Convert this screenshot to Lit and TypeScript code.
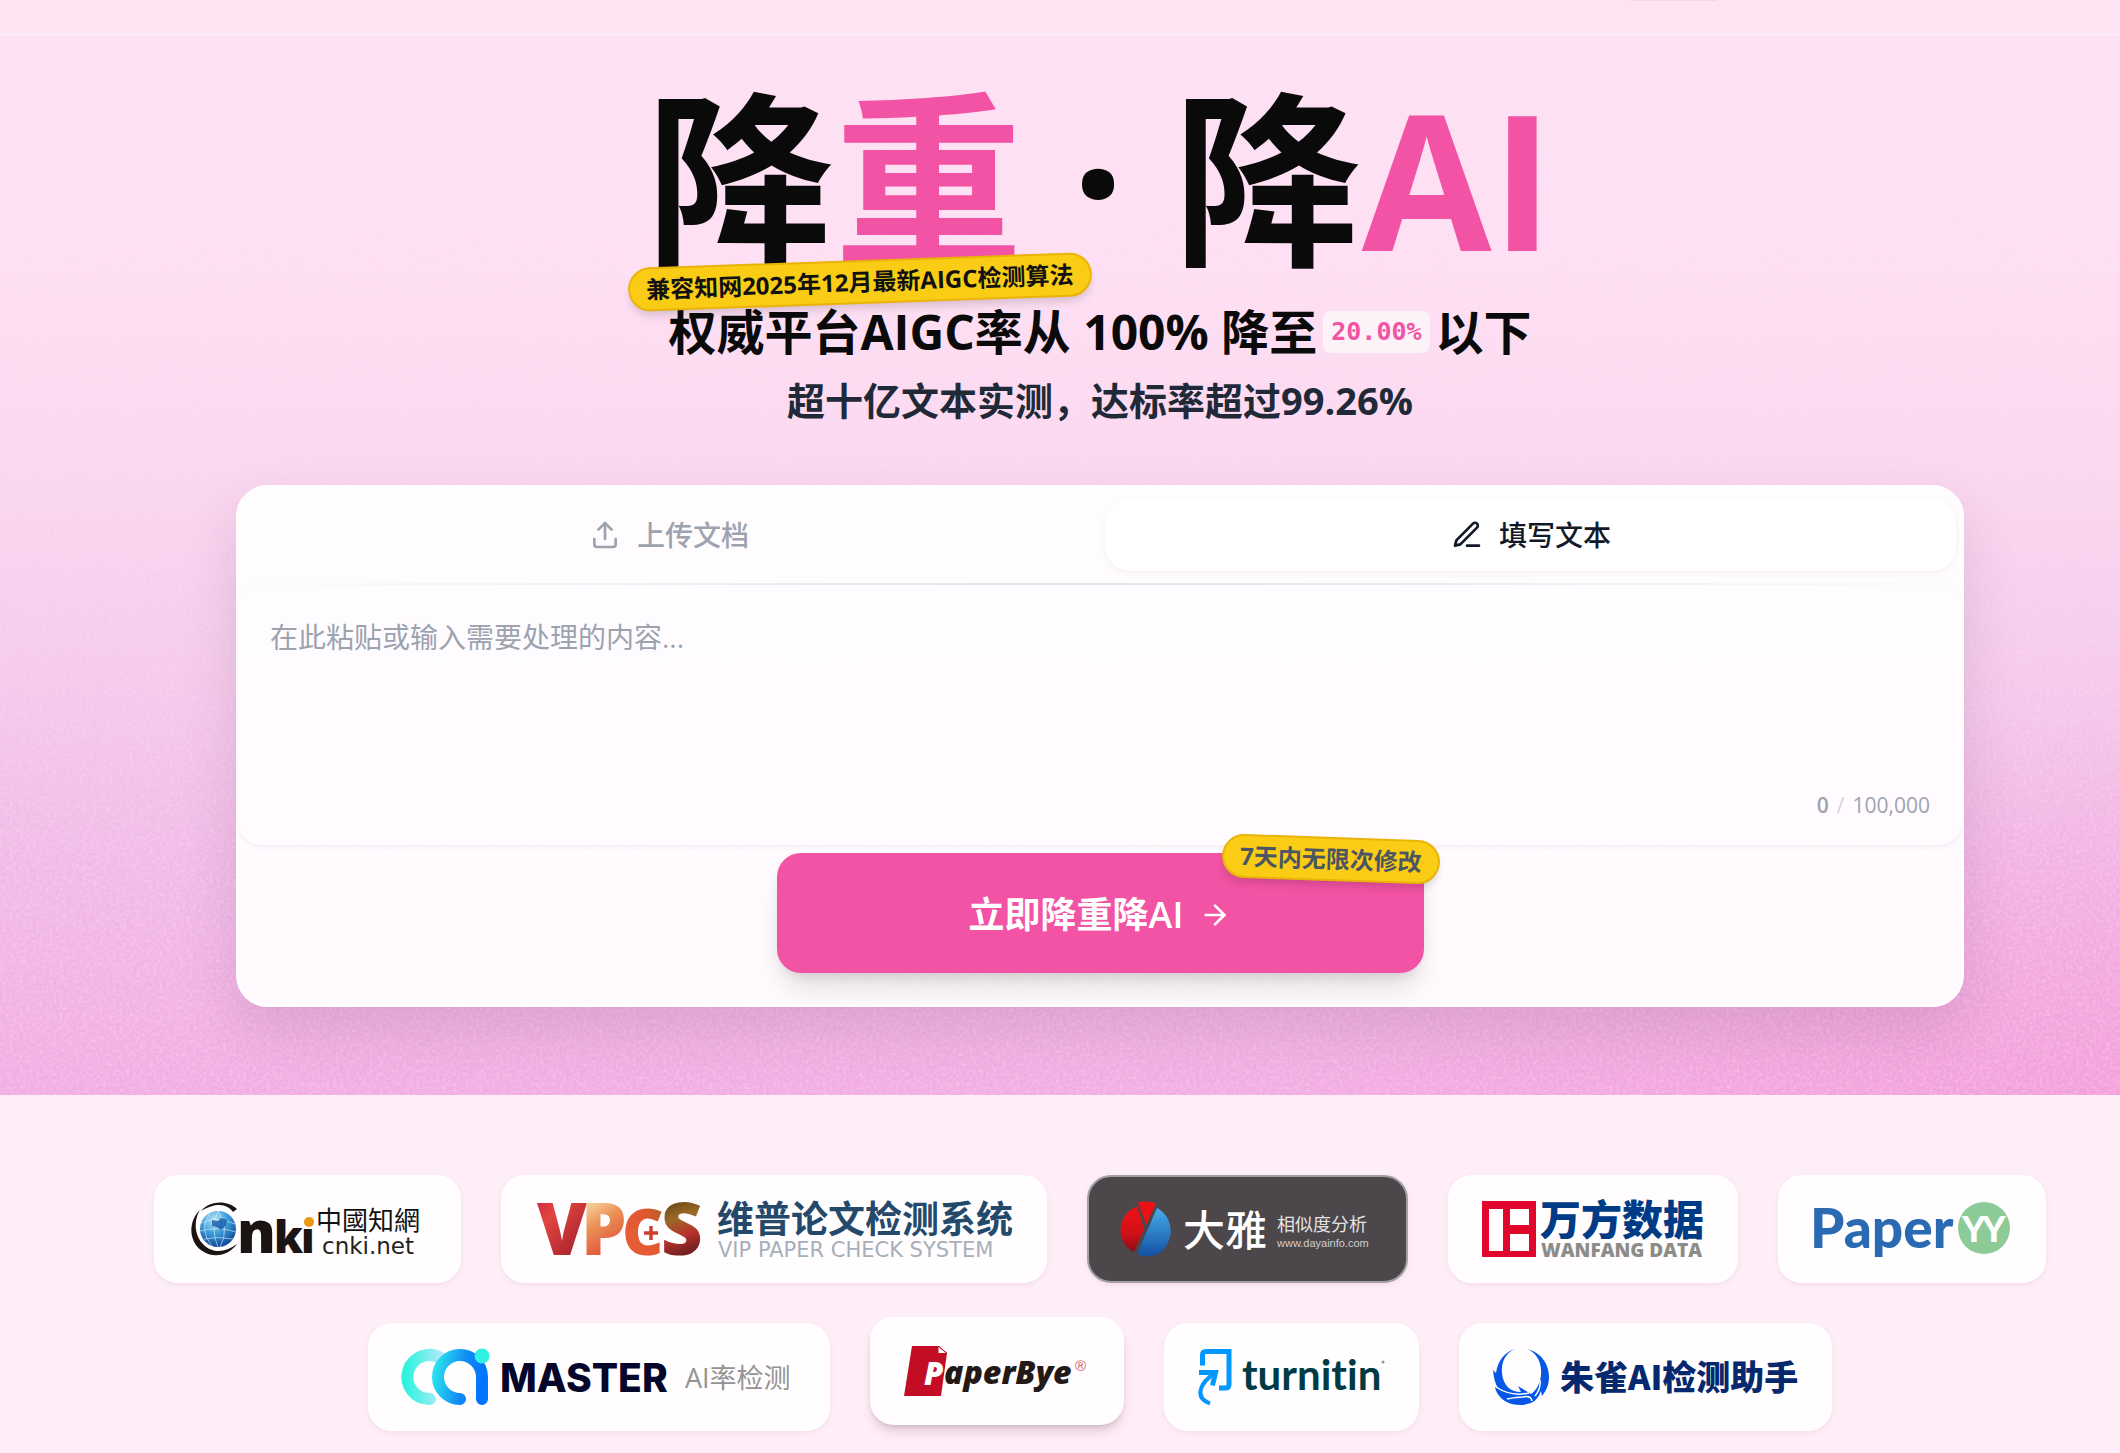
import { LitElement, html, css, svg } from "lit";
import { customElement, property, state } from "lit/decorators.js";

const sans = css`"Open Sans", "Noto Sans CJK SC", sans-serif`;

/* ---------- partner marks ---------- */

const cnki = svg`<svg width="239" height="56" viewBox="0 0 239 56" role="img" aria-label="中國知網">
  <defs>
    <radialGradient id="globe" cx="0.4" cy="0.25" r="0.8">
      <stop offset="0" stop-color="#bfeafb"/><stop offset="0.45" stop-color="#3f9fd8"/><stop offset="1" stop-color="#0a3f94"/>
    </radialGradient>
  </defs>
  <circle cx="30" cy="28" r="18" fill="url(#globe)"/>
  <g fill="none" stroke="#d6f1fb" stroke-width="0.8" opacity="0.75">
    <path d="M13 22Q30 15 47 23M12 30Q30 25 48 31M16 38Q30 35 45 38M30 10Q22 28 30 46M30 10Q42 28 32 46M22 12Q10 28 24 45"/>
  </g>
  <path d="M24 19l6 1 3-3 6 2-1 5-5 5-4-3-5-1z" fill="#0d549f" opacity="0.75"/>
  <path d="M49 8C40-1 22-1 13 10C30 0 40 4 45 11Z" fill="#1b1412"/>
  <path d="M12 9C-1 21 1 43 16 51C28 58 42 53 49 43C36 53 22 52 14 42C5 31 7 17 12 9Z" fill="#1b1412"/>
  <g fill="#1b1412" font-family="Open Sans" font-weight="800">
    <text x="49" y="52" font-size="58">n</text>
    <text x="86" y="52" font-size="44">k</text>
    <text x="113" y="52" font-size="42">ı</text>
  </g>
  <circle cx="121" cy="21" r="5" fill="#ee9712"/>
  <text x="128" y="29" font-size="26" font-family="Noto Sans CJK TC" fill="#111">中國知網</text>
  <text x="134" y="53" font-size="23" font-family="DejaVu Sans" fill="#222">cnki.net</text>
</svg>`;

const vpcs = svg`<svg width="478" height="56" viewBox="0 0 478 56" role="img" aria-label="维普论文检测系统">
  <defs>
    <linearGradient id="gv" x1="0" y1="0" x2="0.6" y2="1"><stop offset="0" stop-color="#c0183f"/><stop offset="0.4" stop-color="#e2453f"/><stop offset="1" stop-color="#a01d2c"/></linearGradient>
    <linearGradient id="gp" x1="0.2" y1="0.2" x2="0.4" y2="0.9"><stop offset="0" stop-color="#f8dda8"/><stop offset="0.4" stop-color="#ec9358"/><stop offset="1" stop-color="#dc4433"/></linearGradient>
    <linearGradient id="gc" x1="1" y1="0" x2="0.2" y2="1"><stop offset="0" stop-color="#8a6c24"/><stop offset="0.4" stop-color="#e0562f"/><stop offset="1" stop-color="#e8603a"/></linearGradient>
    <linearGradient id="gs" x1="0" y1="0.2" x2="0.1" y2="0.85"><stop offset="0" stop-color="#553a12"/><stop offset="0.4" stop-color="#9a6a26"/><stop offset="0.7" stop-color="#b8322c"/><stop offset="1" stop-color="#6f1f20"/></linearGradient>
  </defs>
  <g font-family="Open Sans" font-weight="800" font-size="72">
    <text x="2" y="54" fill="url(#gv)">V</text>
    <text x="46" y="54" fill="url(#gp)">P</text>
    <text x="87" y="54" fill="url(#gc)" font-size="64">C</text>
    <text x="126" y="54" fill="url(#gs)">S</text>
  </g>
  <circle cx="116" cy="32" r="11" fill="#fff"/>
  <path d="M109 32H123M116 25V39" stroke="#cf3f30" stroke-width="3.5"/>
  <text x="182" y="32" font-size="37" font-weight="700" font-family="Noto Sans CJK SC" fill="#24496a">维普论文检测系统</text>
  <text x="183" y="56" font-size="21" font-family="DejaVu Sans" fill="#a7afba">VIP PAPER CHECK SYSTEM</text>
</svg>`;

const daya = svg`<svg width="253" height="56" viewBox="0 0 253 56" role="img" aria-label="大雅相似度分析">
  <defs>
    <linearGradient id="dr" x1="0" y1="0" x2="0" y2="1"><stop offset="0" stop-color="#f01216"/><stop offset="0.6" stop-color="#d01018"/><stop offset="1" stop-color="#8c0c16"/></linearGradient>
    <linearGradient id="db" x1="0" y1="0" x2="0" y2="1"><stop offset="0" stop-color="#45aee8"/><stop offset="1" stop-color="#1450a4"/></linearGradient>
  </defs>
  <path d="M16 5.500C-6 14-5 43 13 51L23 28Z" fill="url(#dr)"/>
  <path d="M17 1.500Q26-1 35 2.500L25 24Z" fill="#ea1014"/>
  <path d="M36 7C56 18 53 46 34 54Q25 57 16 53Z" fill="url(#db)"/>
  <text x="62" y="45" font-size="42" font-weight="500" font-family="Noto Sans CJK SC" fill="#fff">大雅</text>
  <text x="156" y="30" font-size="18" font-family="Noto Sans CJK SC" fill="#e6e4e5">相似度分析</text>
  <text x="156" y="46" font-size="11" font-family="Liberation Sans" fill="#d0cecf">www.dayainfo.com</text>
</svg>`;

const wanfang = svg`<svg width="222" height="56" viewBox="0 0 222 56" role="img" aria-label="万方数据">
  <path fill="#e1062c" fill-rule="evenodd" d="M0 0H54V56H0ZM7 8V50H21V8ZM28 8V24H47V8ZM28 33V50H47V33Z"/>
  <text x="58" y="34" font-size="41" font-weight="900" font-family="Noto Sans CJK SC" fill="#003c86">万方数据</text>
  <text x="59" y="56" font-size="19" font-weight="800" font-family="Open Sans" fill="#8c8d89">WANFANG DATA</text>
</svg>`;

const paperyy = svg`<svg width="200" height="56" viewBox="0 0 200 56" role="img" aria-label="PaperYY">
  <text x="-2" y="47" font-size="55" font-weight="900" font-family="Lato" fill="#2a6ab2">Paper</text>
  <circle cx="172" cy="27" r="26" fill="#8ccb98"/>
  <g fill="#fff" font-family="Lato" font-size="36" font-weight="900"><text x="150" y="41">Y</text><text x="170" y="41">Y</text></g>
</svg>`;

const master = svg`<svg width="394" height="56" viewBox="0 0 394 56" role="img" aria-label="MASTER AI率检测">
  <defs>
    <linearGradient id="m1" gradientUnits="userSpaceOnUse" x1="4" y1="0" x2="42" y2="0"><stop offset="0" stop-color="#2ff3e0"/><stop offset="1" stop-color="#b9e9f8"/></linearGradient>
    <linearGradient id="m2" gradientUnits="userSpaceOnUse" x1="32" y1="20" x2="82" y2="30"><stop offset="0" stop-color="#2be4ee"/><stop offset="0.6" stop-color="#1189f5"/><stop offset="1" stop-color="#0073ff"/></linearGradient>
  </defs>
  <g fill="none" stroke-width="12" stroke-linecap="round">
    <path d="M28 50A22 22 0 1 1 40 10" stroke="url(#m1)"/>
    <path d="M58 50A22 22 0 1 1 80 28V50" stroke="url(#m2)"/>
  </g>
  <circle cx="80" cy="7" r="7.500" fill="#2ff3e0"/>
  <text x="98" y="43" font-size="39" font-weight="800" font-family="Inter" fill="#05062b">MASTER</text>
  <text x="283" y="39" font-size="27" font-weight="400" font-family="Open Sans, Noto Sans CJK SC" fill="#939393">AI率检测</text>
</svg>`;

const paperbye = svg`<svg width="186" height="56" viewBox="0 0 186 56" role="img" aria-label="PaperBye">
  <path d="M8 3H35L43 10L37 53H0Z" fill="#c20d25"/>
  <path d="M34 3V10.500H43Z" fill="#fff" stroke="#c20d25" stroke-width="1"/>
  <g font-family="Open Sans" font-weight="800" font-style="italic">
    <text x="20" y="42" font-size="31" fill="#fff">P</text>
    <text x="40" y="41" font-size="32" fill="#231a17">aperBye</text>
  </g>
  <text x="171" y="28" font-size="15" font-family="Liberation Sans" fill="#d2566a">®</text>
</svg>`;

const turnitin = svg`<svg width="187" height="56" viewBox="0 0 187 56" role="img" aria-label="turnitin">
  <g fill="none" stroke="#0097ff" stroke-width="5">
    <path d="M4.500 16.500V6Q4.500 2.500 8 2.500H31V35.500Q31 39 27.500 39H21"/>
    <path d="M1 23.500H17.500L14.500 36.500"/>
    <path d="M17 24C3 33-5 48 12 54.500" stroke-width="4"/>
  </g>
  <text class="plain" x="44" y="41" font-size="42" font-weight="700" font-family="Lato" fill="#003b45">turnitin</text>
  <circle cx="185" cy="13" r="1.500" fill="#7f9fa3"/>
</svg>`;

const zhuque = svg`<svg width="305" height="56" viewBox="0 0 305 56" role="img" aria-label="朱雀AI检测助手">
  <path fill="#0757e6" d="M22 0C12 4 8 14 9 24C10 36 17 43 28 43L25 37L38 45C44 41 49 32 48 20C47 10 42 3 34 0C47 3 56 14 56 28C56 36 53 42 49 47L48 42Q44 56 27 56C11 56 3 45 2 38L5 39Q1 33 0 21L3 24C5 11 12 3 22 0Z"/>
  <path d="M3 38Q18 48 36 44M14 50Q24 48 30 48Q38 46 39 52M47 31Q48 40 42 47" stroke="#fff" stroke-width="1.500" fill="none"/>
  <text x="67" y="41" font-size="34" font-weight="900" font-family="Noto Sans CJK SC" fill="#06286e">朱雀AI检测助手</text>
</svg>`;

const partners = [
  { art: cnki, look: "" },
  { art: vpcs, look: "" },
  { art: daya, look: "dark" },
  { art: wanfang, look: "" },
  { art: paperyy, look: "" },
  { art: master, look: "" },
  { art: paperbye, look: "raised" },
  { art: turnitin, look: "" },
  { art: zhuque, look: "" },
];

/* ---------- line icons ---------- */

const shapes: Record<string, unknown> = {
  upload: svg`<path d="M4 15v4a2 2 0 0 0 2 2h12a2 2 0 0 0 2-2v-4"/><path d="M7 8l5-5 5 5"/><path d="M12 3v12"/>`,
  pen: svg`<path d="M12 20h9"/><path d="M16.500 3.500a2.120 2.120 0 0 1 3 3L7 19l-4 1 1-4Z"/>`,
  arrow: svg`<path d="M5 12h14"/><path d="m12 5 7 7-7 7"/>`,
};

@customElement("line-icon")
export class LineIcon extends LitElement {
  static styles = css`
    :host { display: inline-flex; }
    .icon { width: 32px; height: 32px; fill: none; stroke: currentColor; stroke-width: 2; stroke-linecap: round; stroke-linejoin: round; }
  `;
  @property() name = "upload";
  render() {
    return html`<svg class="icon" viewBox="0 0 24 24" aria-hidden="true">${shapes[this.name]}</svg>`;
  }
}

@customElement("partner-wall")
export class PartnerWall extends LitElement {
  static styles = css`
    :host { display: block; }
    .wall { display: flex; flex-wrap: wrap; justify-content: center; gap: 40px; margin: 0; padding: 0; list-style: none; }
    .tile { display: flex; padding: 24px 32px; border: 2px solid #fff; border-radius: 24px; background: #fffdfe; box-shadow: 0 2px 6px rgba(80, 20, 60, 0.07); }
    .tile svg { display: block; overflow: visible; }
    .plain { font-variant-ligatures: none; }
    .dark { background: #4c474a; border-color: #a3a1a3; }
    .raised { transform: translateY(-6px); box-shadow: 0 8px 12px -2px rgba(60, 10, 40, 0.16), 0 3px 5px -2px rgba(60, 10, 40, 0.14); }
  `;
  render() {
    return html`<ul class="wall">${partners.map((p) => html`<li class="tile ${p.look}">${p.art}</li>`)}</ul>`;
  }
}

@customElement("text-workbench")
export class TextWorkbench extends LitElement {
  static styles = css`
    :host { display: block; }
    * { box-sizing: border-box; }
    .card { border: 2px solid #fff; border-radius: 32px; background: rgba(255, 255, 255, 0.93); box-shadow: 0 24px 56px rgba(60, 30, 60, 0.13); padding-bottom: 32px; }
    .tabs { display: grid; grid-template-columns: 1fr 1fr; gap: 12px; padding: 12px 6px; }
    .tab { display: flex; align-items: center; justify-content: center; gap: 16px; height: 72px; border: 0; border-radius: 24px; background: transparent; color: #9ca3af; font: 500 28px/40px ${sans}; }
    .tab.on { background: #fff; color: #111827; box-shadow: 0 2px 6px rgba(60, 20, 60, 0.06); }
    .rule { height: 2px; background: linear-gradient(90deg, transparent, #e2e5ea 50%, transparent); }
    .editor { display: flex; flex-direction: column; height: 260px; padding: 30px 32px 24px; border-radius: 24px; background: rgba(255, 251, 255, 0.6); box-shadow: 0 2px 5px rgba(60, 20, 60, 0.06); }
    .input { flex: 1; width: 100%; padding: 0; border: 0; outline: 0; resize: none; background: transparent; color: #111827; font: 400 28px/44px ${sans}; }
    .input::placeholder { color: #9ca3af; opacity: 1; }
    .count { display: flex; gap: 8px; align-self: flex-end; color: #9ca3af; font: 400 21px/32px ${sans}; }
    .count b { font-weight: 600; }
    .count i { font-style: normal; color: #d1d5db; }
    .action { position: relative; width: 647px; max-width: 90%; margin: 8px auto 0; }
    .go { display: flex; align-items: center; justify-content: center; gap: 16px; width: 100%; height: 120px; padding: 4px 0 0; border: 0; border-radius: 24px; background: #f353a4; color: #fff; font: 600 36px/48px ${sans}; box-shadow: 0 20px 30px -8px rgba(0, 0, 0, 0.14), 0 6px 12px -4px rgba(0, 0, 0, 0.1); }
    .flag { position: absolute; top: -16px; right: -16px; height: 44px; padding: 0 16px; border: 2px solid #eab308; border-radius: 22px; background: #facc15; color: #4b5563; font: 700 24px/40px ${sans}; white-space: nowrap; transform: rotate(2deg); box-shadow: 0 6px 10px -2px rgba(0, 0, 0, 0.16); }
  `;
  @state() private mode = "text";
  @state() private text = "";
  render() {
    return html`
      <section class="card">
        <div class="tabs" role="tablist">
          <button class="tab ${this.mode === "file" ? "on" : ""}" role="tab" @click=${() => (this.mode = "file")}>
            <line-icon name="upload"></line-icon>上传文档
          </button>
          <button class="tab ${this.mode === "text" ? "on" : ""}" role="tab" @click=${() => (this.mode = "text")}>
            <line-icon name="pen"></line-icon>填写文本
          </button>
        </div>
        <div class="rule"></div>
        <div class="editor">
          <textarea class="input" aria-label="填写文本" placeholder="在此粘贴或输入需要处理的内容..."
            @input=${(e: Event) => (this.text = (e.target as HTMLTextAreaElement).value)}></textarea>
          <div class="count"><b>${this.text.length}</b><i>/</i><span>100,000</span></div>
        </div>
        <div class="action">
          <button class="go">立即降重降AI<line-icon name="arrow"></line-icon></button>
          <span class="flag">7天内无限次修改</span>
        </div>
      </section>`;
  }
}

@customElement("app-root")
export class AppRoot extends LitElement {
  static styles = css`
    :host { display: block; min-height: 100vh; background: #ffeef8; color: #0a0a0a; font-family: ${sans}; }
    * { box-sizing: border-box; }
    .hero { position: relative; isolation: isolate; overflow: hidden; padding-bottom: 88px; background:
      radial-gradient(ellipse 40% 35% at 100% 100%, rgba(244, 140, 205, 0.4), transparent),
      linear-gradient(180deg, #fee1f4 0%, #fedff3 25%, #fbd8f0 42%, #f6cbec 60%, #f2bbe7 78%, #f2ade2 100%); }
    .grain { position: absolute; inset: 0; z-index: -1; width: 100%; height: 100%; opacity: 0.35; }
    .bar { height: 36px; border-bottom: 2px solid #f9ebf4; background: rgba(253, 230, 242, 0.7); }
    .bar-glow { width: 86px; height: 1px; margin: 0 404px 0 auto; background: #fbd3e6; }
    .inner { display: flex; flex-direction: column; align-items: center; padding: 42px 156px 0 236px; }
    .title { position: relative; margin: 0; font-size: 188px; line-height: 200px; font-weight: 700; white-space: nowrap; }
    .pink { color: #f353a4; }
    .flag { position: absolute; left: -18px; bottom: -26px; height: 44px; padding: 0 16px; border: 2px solid #eab308; border-radius: 22px; background: #facc15; color: #111; font-size: 24px; line-height: 40px; transform: rotate(-2deg); box-shadow: 0 6px 10px -2px rgba(0, 0, 0, 0.16); }
    .lead { display: flex; align-items: center; gap: 6px; margin: 22px 0 0; font-size: 48px; line-height: 64px; font-weight: 700; white-space: pre; }
    .chip { padding: 0 8px; border-radius: 8px; background: #fdf2f8; color: #f353a4; font: 700 25px/42px "DejaVu Sans Mono", monospace; }
    .note { margin: 8px 0 57px; font-size: 38px; line-height: 56px; font-weight: 700; color: #1f2937; }
    .work { align-self: stretch; }
    .partners { padding: 80px 40px 22px 120px; }
  `;
  render() {
    return html`
      <main>
        <div class="hero">
          <svg class="grain" aria-hidden="true">
            <defs>
              <filter id="grain" x="0" y="0" width="100%" height="100%">
                <feTurbulence type="fractalNoise" baseFrequency="0.3" numOctaves="2" seed="4"/>
                <feColorMatrix values="0 0 0 0 1  0 0 0 0 0.85  0 0 0 0 0.97  1.8 0 0 0 -0.7"/>
              </filter>
              <linearGradient id="fade" x1="0" y1="0" x2="0" y2="1">
                <stop offset="0" stop-color="#222"/><stop offset="0.4" stop-color="#777"/><stop offset="0.8" stop-color="#fff"/>
              </linearGradient>
              <mask id="down"><rect width="100%" height="100%" fill="url(#fade)"/></mask>
            </defs>
            <g mask="url(#down)"><rect width="100%" height="100%" filter="url(#grain)"/></g>
          </svg>
          <div class="bar"><div class="bar-glow"></div></div>
          <div class="inner">
            <h1 class="title">降<span class="pink">重</span> · 降<span class="pink">AI</span><span class="flag">兼容知网2025年12月最新AIGC检测算法</span></h1>
            <p class="lead"><span>权威平台AIGC率从 100% 降至</span><span class="chip">20.00%</span><span>以下</span></p>
            <p class="note">超十亿文本实测，达标率超过99.26%</p>
            <text-workbench class="work"></text-workbench>
          </div>
        </div>
        <section class="partners"><partner-wall></partner-wall></section>
      </main>`;
  }
}
